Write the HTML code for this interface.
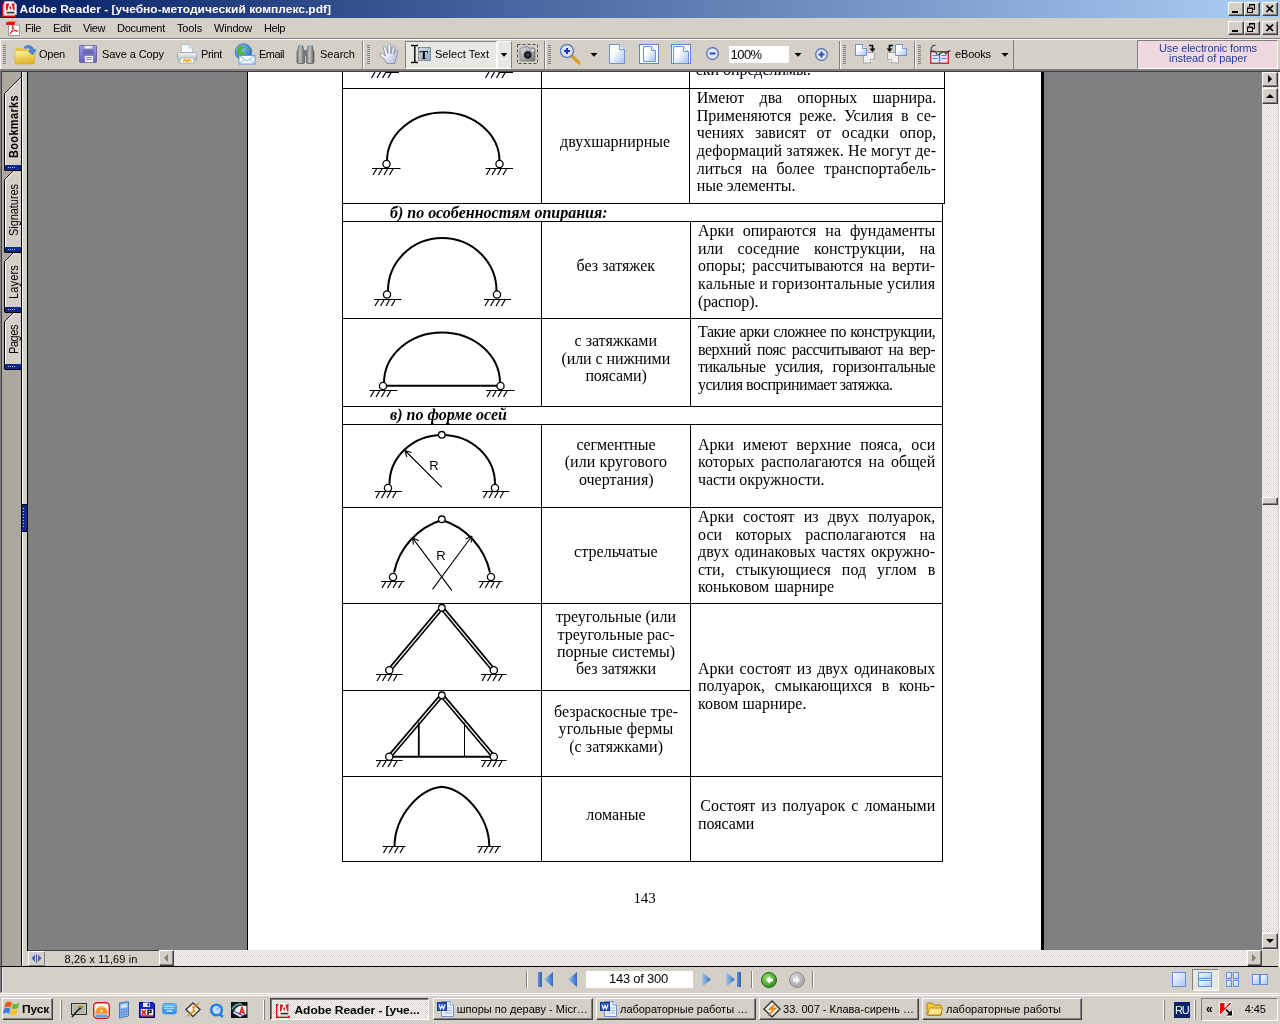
<!DOCTYPE html>
<html lang="ru"><head><meta charset="utf-8"><title>Adobe Reader - [учебно-методический комплекс.pdf]</title>
<style>
html,body{margin:0;padding:0}
body{width:1280px;height:1024px;position:relative;overflow:hidden;background:#d4d0c8;font-family:"Liberation Sans",sans-serif;font-size:11px;color:#000}
.btn{position:absolute;background:#d4d0c8;box-sizing:border-box;border:1px solid;border-color:#fff #404040 #404040 #fff;box-shadow:inset -1px -1px 0 #808080}
.chk{background-image:conic-gradient(#fff 25%,#d4d0c8 0 50%,#fff 0 75%,#d4d0c8 0);background-size:2px 2px}
.grip{position:absolute;width:3px;background:repeating-linear-gradient(to bottom,#808080 0,#808080 1px,transparent 1px,transparent 2px)}
</style></head><body><div id="root" style="position:absolute;left:0;top:0;width:1280px;height:1024px;will-change:transform">
<div style="position:absolute;left:0px;top:0px;width:1280px;height:18px;background:linear-gradient(to right,#0a246a 0%,#0a246a 3%,#a6caf0 97%,#a6caf0 100%)"></div>
<svg style="position:absolute;left:2px;top:1px;" width="16" height="16" viewBox="0 0 16 16"><rect x="0.700" y="2.700" width="12.600" height="12.600" fill="#e8e8e8" stroke="#d01010" stroke-width="1.400"/><path d="M2.500 0.500 H11.500 L14.500 3.500 V13.500 H2.500 Z" fill="#fafafa" stroke="#c8c8c8" stroke-width=".600"/><path d="M11.500 0.500 V3.500 H14.500 Z" fill="#d0d0d0"/><path d="M4 9.500 V2.500 H7.200 L5.300 9.500 Z M12.500 9.500 V2.500 H9.400 L11.300 9.500 Z M8.300 4.800 L9.800 8.400 H8.400 L7.900 7.200 H6.800 Z" fill="#e01818"/><rect x="4.500" y="10.800" width="8" height="1.600" fill="#303030"/></svg>
<div style="position:absolute;left:19.50px;top:0.84px;line-height:16px;white-space:pre;font-family:'Liberation Sans',sans-serif;font-size:12px;font-weight:bold;font-style:normal;letter-spacing:0.000px;color:#fff;transform:scaleY(0.93);transform-origin:0 12.16px;">Adobe Reader - [учебно-методический комплекс.pdf]</div>
<div class="btn" style="left:1228px;top:2px;width:16px;height:14px"><svg width="14" height="12" viewBox="0 0 14 12" style="position:absolute;left:0;top:0" ><rect x="3" y="8" width="6" height="2" fill="#000"/></svg></div>
<div class="btn" style="left:1244px;top:2px;width:16px;height:14px"><svg width="14" height="12" viewBox="0 0 14 12" style="position:absolute;left:0;top:0" ><path d="M4.500 4 V2 H9.500 V6.500 H8" stroke="#000" fill="none"/><path d="M4 1.500 H10" stroke="#000"/><rect x="2.500" y="5.500" width="5" height="4" fill="none" stroke="#000"/><path d="M2 5 H8" stroke="#000"/></svg></div>
<div class="btn" style="left:1262px;top:2px;width:16px;height:14px"><svg width="14" height="12" viewBox="0 0 14 12" style="position:absolute;left:0;top:0" ><path d="M3.500 2.500 L10 9 M10 2.500 L3.500 9" stroke="#000" stroke-width="1.700"/></svg></div>
<div class="btn" style="left:1228px;top:21px;width:16px;height:14px"><svg width="14" height="12" viewBox="0 0 14 12" style="position:absolute;left:0;top:0" ><rect x="3" y="8" width="6" height="2" fill="#000"/></svg></div>
<div class="btn" style="left:1244px;top:21px;width:16px;height:14px"><svg width="14" height="12" viewBox="0 0 14 12" style="position:absolute;left:0;top:0" ><path d="M4.500 4 V2 H9.500 V6.500 H8" stroke="#000" fill="none"/><path d="M4 1.500 H10" stroke="#000"/><rect x="2.500" y="5.500" width="5" height="4" fill="none" stroke="#000"/><path d="M2 5 H8" stroke="#000"/></svg></div>
<div class="btn" style="left:1262px;top:21px;width:16px;height:14px"><svg width="14" height="12" viewBox="0 0 14 12" style="position:absolute;left:0;top:0" ><path d="M3.500 2.500 L10 9 M10 2.500 L3.500 9" stroke="#000" stroke-width="1.700"/></svg></div>
<svg style="position:absolute;left:5px;top:20px;" width="16" height="17" viewBox="0 0 16 17"><path d="M3.5 1.5 H11 L14.5 5 V15.5 H3.5 Z" fill="#fff" stroke="#9a9a9a"/><path d="M11 1.5 V5 H14.5" fill="#e8e8e8" stroke="#9a9a9a"/><rect x="1" y="2" width="9" height="3" fill="#e01818"/><path d="M5 14 C7 11 8.5 8 8 5.5 C7.5 4.5 7 6 8 8 C9 10 11 11.5 12.5 11.5 C13.5 11 12 10.3 10 10.6 C8 11 6 12 4.5 13.5" stroke="#e02020" fill="none" stroke-width="1"/></svg>
<div style="position:absolute;left:25.00px;top:21.19px;line-height:14px;white-space:pre;font-family:'Liberation Sans',sans-serif;font-size:11px;font-weight:normal;font-style:normal;letter-spacing:-0.434px;">File</div>
<div style="position:absolute;left:53.00px;top:21.19px;line-height:14px;white-space:pre;font-family:'Liberation Sans',sans-serif;font-size:11px;font-weight:normal;font-style:normal;letter-spacing:-0.242px;">Edit</div>
<div style="position:absolute;left:83.00px;top:21.19px;line-height:14px;white-space:pre;font-family:'Liberation Sans',sans-serif;font-size:11px;font-weight:normal;font-style:normal;letter-spacing:-0.414px;">View</div>
<div style="position:absolute;left:117.00px;top:21.19px;line-height:14px;white-space:pre;font-family:'Liberation Sans',sans-serif;font-size:11px;font-weight:normal;font-style:normal;letter-spacing:-0.268px;">Document</div>
<div style="position:absolute;left:177.00px;top:21.19px;line-height:14px;white-space:pre;font-family:'Liberation Sans',sans-serif;font-size:11px;font-weight:normal;font-style:normal;letter-spacing:-0.138px;">Tools</div>
<div style="position:absolute;left:214.00px;top:21.19px;line-height:14px;white-space:pre;font-family:'Liberation Sans',sans-serif;font-size:11px;font-weight:normal;font-style:normal;letter-spacing:-0.188px;">Window</div>
<div style="position:absolute;left:264.00px;top:21.19px;line-height:14px;white-space:pre;font-family:'Liberation Sans',sans-serif;font-size:11px;font-weight:normal;font-style:normal;letter-spacing:-0.406px;">Help</div>
<div style="position:absolute;left:0px;top:38px;width:1280px;height:1px;background:#808080"></div>
<div style="position:absolute;left:0px;top:39px;width:1280px;height:1px;background:#fff"></div>
<div class="grip" style="left:3px;top:45px;height:19px"></div>
<div style="position:absolute;left:0px;top:40px;width:1px;height:29px;background:#fff"></div>
<svg style="position:absolute;left:13px;top:42px;" width="24" height="24" viewBox="0 0 24 24"><defs><linearGradient id="fo" x1="0" y1="0" x2="0.300" y2="1"><stop offset="0" stop-color="#fff6a8"/><stop offset="1" stop-color="#e4b428"/></linearGradient></defs><path d="M2.500 7 C2.500 6.300 3 6 3.500 6 H9.500 L11 7.500 H14 V10 H2.500 Z" fill="#e8c040"/><path d="M1.500 9.500 L3 8.500 H21.500 L22.500 9.500 L21 22 H2.500 Z" fill="url(#fo)" stroke="#d4a420" stroke-width=".600"/><path d="M11 5.500 C13 2.500 19.500 2.500 20.500 8 L22.800 7.600 L19.500 13 L15.500 9 L17.800 8.600 C17.300 5.600 14 5.300 12.500 6.500 Z" fill="#4c8cdc" stroke="#2c64b4" stroke-width=".700"/></svg>
<div style="position:absolute;left:39.00px;top:47.19px;line-height:14px;white-space:pre;font-family:'Liberation Sans',sans-serif;font-size:11px;font-weight:normal;font-style:normal;letter-spacing:-0.230px;">Open</div>
<svg style="position:absolute;left:78px;top:42px;" width="22" height="24" viewBox="0 0 22 24"><defs><linearGradient id="fs" x1="0" y1="0" x2="0" y2="1"><stop offset="0" stop-color="#9c9ce8"/><stop offset="1" stop-color="#6464b8"/></linearGradient></defs><path d="M1.500 4.500 C1.500 3.800 2 3.500 2.500 3.500 H17.500 C18.200 3.500 18.500 4 18.500 4.500 V19.500 C18.500 20.200 18 20.500 17.500 20.500 H2.500 C1.800 20.500 1.500 20 1.500 19.500 Z" fill="url(#fs)" stroke="#5858a8" stroke-width=".800"/><rect x="6" y="3.500" width="9" height="3.500" fill="#d8d8e0" stroke="#7070a0" stroke-width=".500"/><rect x="8" y="4.200" width="4" height="1.800" fill="#f8f8f8"/><rect x="4.500" y="7.500" width="11" height="5" fill="#5050a0" opacity=".550"/><rect x="6.500" y="13.500" width="9" height="7" fill="#f8f8fc" stroke="#5050a0" stroke-width=".500"/><path d="M8 15.500 H14 M8 17.500 H14" stroke="#8888a8" stroke-width="1"/></svg>
<div style="position:absolute;left:102.00px;top:47.19px;line-height:14px;white-space:pre;font-family:'Liberation Sans',sans-serif;font-size:11px;font-weight:normal;font-style:normal;letter-spacing:-0.089px;">Save a Copy</div>
<svg style="position:absolute;left:176px;top:42px;" width="24" height="24" viewBox="0 0 24 24"><defs><linearGradient id="pr" x1="0" y1="0" x2="0" y2="1"><stop offset="0" stop-color="#f4f6f8"/><stop offset="1" stop-color="#b4bcc8"/></linearGradient></defs><path d="M5.500 2.500 H13 L16.500 6 V11 H5.500 Z" fill="#f8fbff" stroke="#a8b8d0" stroke-width=".800"/><path d="M13 2.500 V6 H16.500" fill="#dce8f8" stroke="#a8b8d0" stroke-width=".600"/><path d="M3 10.500 H19 C20 10.500 20.500 11 20.500 12 V17 C20.500 18 20 18.500 19 18.500 H3 C2 18.500 1.500 18 1.500 17 V12 C1.500 11 2 10.500 3 10.500 Z" fill="url(#pr)" stroke="#98a0b0" stroke-width=".800"/><path d="M4.500 16 H17.500 L18.500 21 H3.500 Z" fill="#f4f4f0" stroke="#a0a8b4" stroke-width=".700"/><path d="M7 19 L9 17.500 L11 19.500 L13 17.500 L15 19.500" stroke="#f0b000" fill="none" stroke-width="1.600"/></svg>
<div style="position:absolute;left:201.00px;top:47.19px;line-height:14px;white-space:pre;font-family:'Liberation Sans',sans-serif;font-size:11px;font-weight:normal;font-style:normal;letter-spacing:-0.325px;">Print</div>
<svg style="position:absolute;left:233px;top:42px;" width="24" height="24" viewBox="0 0 24 24"><defs><radialGradient id="gl" cx=".350" cy=".300" r=".800"><stop offset="0" stop-color="#8cc8ff"/><stop offset="1" stop-color="#1c64c0"/></radialGradient></defs><circle cx="10.500" cy="10" r="8.300" fill="url(#gl)" stroke="#2464b0" stroke-width=".600"/><path d="M6 4.500 C8 3 11 3.500 12 5 C11 7 8.500 7 8 9 C9.500 10.500 12 10 13 12 C12 14.500 9.500 15.500 8.500 17.500 C6 15 5 12 4 10 C3.500 8 4.500 6 6 4.500 Z" fill="#58b048"/><path d="M14.500 4.500 C16.500 6 17 8 16 9.500 C15 8 14 6.500 14.500 4.500 Z" fill="#58b048"/><rect x="6" y="13.500" width="16" height="8.500" fill="#fbfdff" stroke="#5c94e0" stroke-width=".900"/><path d="M6 13.500 L14 19 L22 13.500 M6 22 L11.500 17.500 M22 22 L16.500 17.500" fill="none" stroke="#78a8e8" stroke-width=".900"/></svg>
<div style="position:absolute;left:259.00px;top:47.19px;line-height:14px;white-space:pre;font-family:'Liberation Sans',sans-serif;font-size:11px;font-weight:normal;font-style:normal;letter-spacing:-0.503px;">Email</div>
<svg style="position:absolute;left:295px;top:42px;" width="24" height="24" viewBox="0 0 24 24"><defs><linearGradient id="bn" x1="0" y1="0" x2="1" y2="0"><stop offset="0" stop-color="#707070"/><stop offset=".400" stop-color="#c4c4c4"/><stop offset="1" stop-color="#606060"/></linearGradient></defs><path d="M2 10 L3.500 6 V4 H8 V6 L9.500 10 V20 C9.500 21 9 21.500 8 21.500 H3.500 C2.500 21.500 2 21 2 20 Z" fill="url(#bn)" stroke="#585858" stroke-width=".700"/><path d="M11.500 10 L13 6 V4 H17.500 V6 L19 10 V20 C19 21 18.500 21.500 17.500 21.500 H13 C12 21.500 11.500 21 11.500 20 Z" fill="url(#bn)" stroke="#585858" stroke-width=".700"/><rect x="9" y="8" width="3" height="6" fill="#787878"/><rect x="4" y="3.300" width="3.500" height="1.400" fill="#90b8e0"/><rect x="13.500" y="3.300" width="3.500" height="1.400" fill="#90b8e0"/></svg>
<div style="position:absolute;left:320.00px;top:47.19px;line-height:14px;white-space:pre;font-family:'Liberation Sans',sans-serif;font-size:11px;font-weight:normal;font-style:normal;letter-spacing:0.023px;">Search</div>
<div style="position:absolute;left:362px;top:41px;width:1px;height:28px;background:#808080"></div>
<div style="position:absolute;left:363px;top:41px;width:1px;height:28px;background:#fff"></div>
<div class="grip" style="left:367px;top:45px;height:19px"></div>
<svg style="position:absolute;left:376px;top:42px;" width="24" height="24" viewBox="0 0 24 24"><defs><linearGradient id="hg" x1="0" y1="0" x2="1" y2="1"><stop offset="0.3" stop-color="#fff"/><stop offset="1" stop-color="#a8b4d4"/></linearGradient></defs><path d="M11 21.500 C9 18 7 15.500 4.500 13.500 C3.500 12 4.500 10.500 6.500 11.500 L9.500 14 L7.500 6.500 C7.200 4.500 9.500 4 10.200 6 L12 11.500 L11.800 4 C11.800 1.800 14.600 1.800 14.800 4 L15 11.500 L16.300 5 C16.800 3 19.200 3.500 18.900 5.500 L17.800 12.500 L19.800 9 C20.800 7.200 22.600 8.200 21.800 10 C20.500 14 20 18 18.800 21.500 Z" fill="url(#hg)" stroke="#8890a8" stroke-width="1" stroke-linejoin="round"/></svg>
<div style="position:absolute;left:405px;top:41px;width:92px;height:28px;box-sizing:border-box;background:#eae8e3;border:1px solid;border-color:#808080 #fff #fff #808080"></div>
<div style="position:absolute;left:497px;top:41px;width:15px;height:28px;box-sizing:border-box;background:#eae8e3;border:1px solid;border-color:#fff #808080 #fff #fff"></div>
<svg style="position:absolute;left:408px;top:43px;" width="26" height="22" viewBox="0 0 26 22"><defs><linearGradient id="tg" x1="0" y1="0" x2="1" y2="1"><stop offset="0" stop-color="#d0dae4"/><stop offset="1" stop-color="#94aac4"/></linearGradient></defs><rect x="10.500" y="4.500" width="12" height="13" fill="url(#tg)" stroke="#606870" stroke-dasharray="2 1"/><path d="M3 2.500 H6 M10 2.500 H7.500 M6.800 2 V20 M3 19.500 H6 M10 19.500 H7.500" stroke="#101010" stroke-width="1.500" fill="none"/></svg>
<div style="position:absolute;left:419.50px;top:46.11px;line-height:17px;white-space:pre;font-family:'Liberation Serif',serif;font-size:13px;font-weight:bold;font-style:normal;letter-spacing:-0.172px;">T</div>
<div style="position:absolute;left:435.00px;top:47.19px;line-height:14px;white-space:pre;font-family:'Liberation Sans',sans-serif;font-size:11px;font-weight:normal;font-style:normal;letter-spacing:0.036px;">Select Text</div>
<svg style="position:absolute;left:500px;top:53px;" width="8" height="5" viewBox="0 0 8 5"><path d="M0.500 0 H7.500 L4 3.800 Z" fill="#000"/></svg>
<svg style="position:absolute;left:516px;top:43px;" width="24" height="22" viewBox="0 0 24 22"><defs><linearGradient id="cm" x1="0" y1="0" x2="1" y2="1"><stop offset="0" stop-color="#e4e4e8"/><stop offset="1" stop-color="#707078"/></linearGradient></defs><rect x="1.500" y="1.500" width="20" height="19" fill="none" stroke="#505050" stroke-dasharray="3 2"/><path d="M4 6.500 C4 5.500 4.500 5 5.500 5 H7 L8 3.800 H12 L13 5 H17.500 C18.500 5 19 5.500 19 6.500 V16.500 C19 17.500 18.500 18 17.500 18 H5.500 C4.500 18 4 17.500 4 16.500 Z" fill="url(#cm)" stroke="#686870" stroke-width=".700"/><circle cx="11.800" cy="12" r="4.300" fill="#181820" stroke="#a8a8b0" stroke-width="1"/><circle cx="11.800" cy="12" r="1.600" fill="#404860"/><rect x="15.500" y="6.500" width="2.500" height="1.500" fill="#f4f4f4"/></svg>
<div style="position:absolute;left:544px;top:41px;width:1px;height:28px;background:#808080"></div>
<div style="position:absolute;left:545px;top:41px;width:1px;height:28px;background:#fff"></div>
<div class="grip" style="left:548px;top:45px;height:19px"></div>
<svg style="position:absolute;left:558px;top:42px;" width="24" height="24" viewBox="0 0 24 24"><path d="M12 12 L21 21" stroke="#d8a020" stroke-width="3.2" stroke-linecap="round"/><circle cx="9" cy="9" r="6.500" fill="#d8e4ff" stroke="#7080a8" stroke-width="1.500"/><path d="M6 9 H12 M9 6 V12" stroke="#2030c0" stroke-width="2"/></svg>
<svg style="position:absolute;left:590px;top:53px;" width="8" height="5" viewBox="0 0 8 5"><path d="M0.500 0 H7.500 L4 3.800 Z" fill="#000"/></svg>
<svg width="0" height="0" style="position:absolute"><defs><linearGradient id="pgg" x1="0" y1="0" x2="1" y2="1"><stop offset="0.35" stop-color="#fff"/><stop offset="1" stop-color="#a4c0f0"/></linearGradient></defs></svg>
<svg style="position:absolute;left:608px;top:43px;" width="20" height="22" viewBox="0 0 20 22"><path d="M1.5 1.5 H11.5 L16.5 6.5 V20.5 H1.5 Z" fill="url(#pgg)" stroke="#6c94d4"/><path d="M11.5 1.5 V6.5 H16.5" fill="#f4f8ff" stroke="#6c94d4"/></svg>
<svg style="position:absolute;left:638px;top:43px;" width="22" height="22" viewBox="0 0 22 22"><rect x="1.500" y="1.500" width="19" height="19" fill="#fff" stroke="#5888cc" stroke-width="1"/><path d="M5.5 3.5 H13.5 L17.5 7.5 V18.5 H5.5 Z" fill="url(#pgg)" stroke="#6c94d4"/><path d="M13.5 3.5 V7.5 H17.5" fill="#f4f8ff" stroke="#6c94d4"/></svg>
<svg style="position:absolute;left:670px;top:43px;" width="22" height="22" viewBox="0 0 22 22"><rect x="1.500" y="1.500" width="19" height="19" fill="#fff" stroke="#5888cc" stroke-width="1"/><path d="M3.5 3.5 H13.5 L18.5 8.5 V20.5 H3.5 Z" fill="url(#pgg)" stroke="#6c94d4"/><path d="M13.5 3.5 V8.5 H18.5" fill="#f4f8ff" stroke="#6c94d4"/></svg>
<svg style="position:absolute;left:706px;top:47px;" width="13" height="13" viewBox="0 0 13 13"><circle cx="6.500" cy="6.500" r="5.800" fill="#e0e8ff" stroke="#5068b0" stroke-width="1.200"/><path d="M3.500 6.500 H9.500" stroke="#3050b0" stroke-width="2"/></svg>
<div style="position:absolute;left:729px;top:46px;width:60px;height:17px;background:#fff"></div>
<div style="position:absolute;left:730.60px;top:45.60px;line-height:17px;white-space:pre;font-family:'Liberation Sans',sans-serif;font-size:13px;font-weight:normal;font-style:normal;letter-spacing:-0.562px;">100%</div>
<svg style="position:absolute;left:794px;top:53px;" width="8" height="5" viewBox="0 0 8 5"><path d="M0.500 0 H7.500 L4 3.800 Z" fill="#000"/></svg>
<svg style="position:absolute;left:815px;top:47.5px;" width="13" height="13" viewBox="0 0 13 13"><circle cx="6.500" cy="6.500" r="5.800" fill="#e0e8ff" stroke="#5068b0" stroke-width="1.200"/><path d="M3.500 6.500 H9.500 M6.500 3.500 V9.500" stroke="#3050b0" stroke-width="2"/></svg>
<div style="position:absolute;left:839px;top:41px;width:1px;height:28px;background:#808080"></div>
<div style="position:absolute;left:840px;top:41px;width:1px;height:28px;background:#fff"></div>
<div class="grip" style="left:843px;top:45px;height:19px"></div>
<svg style="position:absolute;left:853px;top:43px;" width="24" height="22" viewBox="0 0 24 22"><path d="M10.500 9.500 H21.500 V16.500 L17.500 20 H10.500 Z" fill="#f0f0f0" stroke="#a8a8a8"/><path d="M17.500 20 V16.500 H21.500" fill="#fff" stroke="#a8a8a8"/><path d="M2.5 1.5 H9.5 L13.5 5.5 V12.5 H2.5 Z" fill="url(#pgg)" stroke="#6c94d4"/><path d="M9.5 1.5 V5.5 H13.5" fill="#f4f8ff" stroke="#6c94d4"/><path d="M16 2.500 H19.500 V6" fill="none" stroke="#000" stroke-width="1.600"/><path d="M16.500 5.500 H22.500 L19.500 9 Z" fill="#000"/></svg>
<svg style="position:absolute;left:885px;top:43px;" width="24" height="22" viewBox="0 0 24 22"><path d="M2.500 9.500 H13.500 V20 H6.500 L2.500 16.500 Z" fill="#f0f0f0" stroke="#a8a8a8"/><path d="M6.500 20 V16.500 H2.500" fill="#fff" stroke="#a8a8a8"/><path d="M10.5 1.5 H17.5 L21.5 5.5 V12.5 H10.5 Z" fill="url(#pgg)" stroke="#6c94d4"/><path d="M17.5 1.5 V5.5 H21.5" fill="#f4f8ff" stroke="#6c94d4"/><path d="M8 2.500 H4.500 V6" fill="none" stroke="#000" stroke-width="1.600"/><path d="M1.500 5.500 H7.500 L4.500 9 Z" fill="#000"/></svg>
<div style="position:absolute;left:914px;top:41px;width:1px;height:28px;background:#808080"></div>
<div style="position:absolute;left:915px;top:41px;width:1px;height:28px;background:#fff"></div>
<div class="grip" style="left:918px;top:45px;height:19px"></div>
<svg style="position:absolute;left:928px;top:42px;" width="24" height="24" viewBox="0 0 24 24"><rect x="2.700" y="9.700" width="17.600" height="11.600" fill="#e4e4fc" stroke="#c83030" stroke-width="1.400"/><path d="M11.500 10 V21" stroke="#5078d0" stroke-width="1.200"/><path d="M4.500 13.500 H9.500 M4.500 16.500 H9.500 M13.500 13.500 H18.500 M13.500 16.500 H18.500" stroke="#6878d0" stroke-width="1.200"/><path d="M3 10 C2.500 5 5 2.500 7.500 3.500 M3.500 9.500 C5 8 7.500 9 8.500 11.500 C9.500 13.500 11.500 13.500 12.500 11.500 C14 9 17 9.500 18 12 C19 10 21 8.500 22.500 9" fill="none" stroke="#383838" stroke-width="1.100"/></svg>
<div style="position:absolute;left:955.00px;top:47.19px;line-height:14px;white-space:pre;font-family:'Liberation Sans',sans-serif;font-size:11px;font-weight:normal;font-style:normal;letter-spacing:-0.117px;">eBooks</div>
<svg style="position:absolute;left:1001px;top:53px;" width="8" height="5" viewBox="0 0 8 5"><path d="M0.500 0 H7.500 L4 3.800 Z" fill="#000"/></svg>
<div style="position:absolute;left:1013px;top:40px;width:1px;height:29px;background:#808080"></div>
<div style="position:absolute;left:1137px;top:40px;width:141px;height:29px;box-sizing:border-box;background:#f0d8e0;border:1px solid;border-color:#808080 #fff #fff #808080"></div>
<div style="position:absolute;left:1159.00px;top:41.19px;line-height:14px;white-space:pre;font-family:'Liberation Sans',sans-serif;font-size:11px;font-weight:normal;font-style:normal;letter-spacing:-0.113px;color:#2040a0;">Use electronic forms</div>
<div style="position:absolute;left:1169.00px;top:51.19px;line-height:14px;white-space:pre;font-family:'Liberation Sans',sans-serif;font-size:11px;font-weight:normal;font-style:normal;letter-spacing:-0.056px;color:#2040a0;">instead of paper</div>
<div style="position:absolute;left:0px;top:69px;width:1280px;height:2px;background:#808080"></div>
<div style="position:absolute;left:1px;top:71px;width:1279px;height:1px;background:#404040"></div>
<div style="position:absolute;left:0px;top:72px;width:1280px;height:878px;background:#808080"></div>
<div style="position:absolute;left:0px;top:71px;width:1px;height:896px;background:#808080"></div>
<div style="position:absolute;left:1px;top:71px;width:1px;height:896px;background:#404040"></div>
<div style="position:absolute;left:2px;top:72px;width:19px;height:895px;background:#aca8a0"></div>
<div style="position:absolute;left:21px;top:72px;width:1px;height:895px;background:#000"></div>
<div style="position:absolute;left:22px;top:72px;width:1px;height:895px;background:#fff"></div>
<div style="position:absolute;left:23px;top:72px;width:4px;height:895px;background:#d4d0c8"></div>
<div style="position:absolute;left:27px;top:72px;width:1px;height:879px;background:#000"></div>
<div style="position:absolute;left:21px;top:504px;width:7px;height:28px;background:#000"></div>
<div style="position:absolute;left:22px;top:505px;width:5px;height:26px;background:#10288c"></div>
<div style="position:absolute;left:23px;top:508px;width:1px;height:19px;background:repeating-linear-gradient(to bottom,#d0d8f0 0,#d0d8f0 1px,transparent 1px,transparent 3px)"></div>
<svg style="position:absolute;left:3px;top:304px;" width="19" height="66" viewBox="0 0 19 66"><path d="M18 0 L1 17 V66 H18 Z" fill="#d4d0c8"/><path d="M18 2.5 L2.5 18 V60" fill="none" stroke="#fff"/><path d="M18 1 L1.5 17.5 V65" fill="none" stroke="#000"/><rect x="2" y="60" width="16" height="5" fill="#10288c"/><path d="M1.5 65.5 H18" stroke="#000"/><path d="M5 62.5 H13" stroke="#b0c0f0" stroke-dasharray="1 1"/></svg>
<svg style="position:absolute;left:3px;top:244px;" width="19" height="69" viewBox="0 0 19 69"><path d="M18 0 L1 17 V69 H18 Z" fill="#d4d0c8"/><path d="M18 2.5 L2.5 18 V63" fill="none" stroke="#fff"/><path d="M18 1 L1.5 17.5 V68" fill="none" stroke="#000"/><rect x="2" y="63" width="16" height="5" fill="#10288c"/><path d="M1.5 68.5 H18" stroke="#000"/><path d="M5 65.5 H13" stroke="#b0c0f0" stroke-dasharray="1 1"/></svg>
<svg style="position:absolute;left:3px;top:162px;" width="19" height="91" viewBox="0 0 19 91"><path d="M18 0 L1 17 V91 H18 Z" fill="#d4d0c8"/><path d="M18 2.5 L2.5 18 V85" fill="none" stroke="#fff"/><path d="M18 1 L1.5 17.5 V90" fill="none" stroke="#000"/><rect x="2" y="85" width="16" height="5" fill="#10288c"/><path d="M1.5 90.5 H18" stroke="#000"/><path d="M5 87.5 H13" stroke="#b0c0f0" stroke-dasharray="1 1"/></svg>
<svg style="position:absolute;left:3px;top:76px;" width="19" height="95" viewBox="0 0 19 95"><path d="M18 0 L1 17 V95 H18 Z" fill="#d4d0c8"/><path d="M18 2.5 L2.5 18 V89" fill="none" stroke="#fff"/><path d="M18 1 L1.5 17.5 V94" fill="none" stroke="#000"/><rect x="2" y="89" width="16" height="5" fill="#10288c"/><path d="M1.5 94.5 H18" stroke="#000"/><path d="M5 91.5 H13" stroke="#b0c0f0" stroke-dasharray="1 1"/></svg>
<div style="position:absolute;left:17.5px;top:158px;width:0;height:0"><div style="position:absolute;left:0;top:-12px;line-height:16px;white-space:pre;transform-origin:0 12px;transform:rotate(-90deg) scaleY(1.1);font-family:'Liberation Sans',sans-serif;font-size:11px;font-weight:bold;font-style:normal;letter-spacing:0.342px">Bookmarks</div></div>
<div style="position:absolute;left:17.5px;top:236px;width:0;height:0"><div style="position:absolute;left:0;top:-12px;line-height:16px;white-space:pre;transform-origin:0 12px;transform:rotate(-90deg) scaleY(1.1);font-family:'Liberation Sans',sans-serif;font-size:11px;font-weight:normal;font-style:normal;letter-spacing:-0.059px">Signatures</div></div>
<div style="position:absolute;left:17.5px;top:298.5px;width:0;height:0"><div style="position:absolute;left:0;top:-12px;line-height:16px;white-space:pre;transform-origin:0 12px;transform:rotate(-90deg) scaleY(1.1);font-family:'Liberation Sans',sans-serif;font-size:11px;font-weight:normal;font-style:normal;letter-spacing:0.161px">Layers</div></div>
<div style="position:absolute;left:17.5px;top:354px;width:0;height:0"><div style="position:absolute;left:0;top:-12px;line-height:16px;white-space:pre;transform-origin:0 12px;transform:rotate(-90deg) scaleY(1.1);font-family:'Liberation Sans',sans-serif;font-size:11px;font-weight:normal;font-style:normal;letter-spacing:-0.441px">Pages</div></div>
<div style="position:absolute;left:247px;top:72px;width:1px;height:878px;background:#000"></div>
<div style="position:absolute;left:248px;top:72px;width:793px;height:878px;background:#fff"></div>
<div style="position:absolute;left:1041px;top:72px;width:3px;height:878px;background:#000"></div>
<div class="chk" style="position:absolute;left:1262px;top:72px;width:16px;height:878px"></div>
<div style="position:absolute;left:1278px;top:72px;width:1px;height:895px;background:#d4d0c8"></div>
<div style="position:absolute;left:1279px;top:72px;width:1px;height:895px;background:#fff"></div>
<div class="btn" style="left:1262px;top:72px;width:16px;height:15px"><svg width="4" height="8" style="position:absolute;left:5px;top:2px" fill="#000"><path d="M0 0 L4 4 L0 8 Z"/></svg></div>
<div class="btn" style="left:1262px;top:88px;width:16px;height:16px"><svg width="8" height="4" style="position:absolute;left:3px;top:5px" fill="#000"><path d="M0 4 L4 0 L8 4 Z"/></svg></div>
<div class="btn" style="left:1262px;top:933px;width:16px;height:16px"><svg width="8" height="4" style="position:absolute;left:3px;top:5px" fill="#000"><path d="M0 0 L4 4 L8 0 Z"/></svg></div>
<div class="btn" style="left:1262px;top:497px;width:16px;height:8px"></div>
<div style="position:absolute;left:0;top:72px;width:1262px;height:878px;overflow:hidden"><div style="position:absolute;left:0;top:-72px;width:1262px;height:1024px">
<svg style="position:absolute;left:0px;top:0px;" width="1262" height="1024" viewBox="0 0 1262 1024"><g fill="#000"><rect x="342" y="60" width="1" height="802"/><rect x="541" y="60" width="1" height="143"/><rect x="689" y="60" width="1" height="143"/><rect x="944" y="60" width="1" height="144"/><rect x="342" y="88" width="603" height="1"/><rect x="342" y="203" width="603" height="1"/><rect x="342" y="221" width="601" height="1"/><rect x="942" y="204" width="1" height="658"/><rect x="541" y="221" width="1" height="185"/><rect x="690" y="221" width="1" height="185"/><rect x="342" y="318" width="601" height="1"/><rect x="342" y="406" width="601" height="1"/><rect x="342" y="424" width="601" height="1"/><rect x="541" y="424" width="1" height="438"/><rect x="690" y="424" width="1" height="438"/><rect x="342" y="507" width="601" height="1"/><rect x="342" y="603" width="601" height="1"/><rect x="342" y="690" width="349" height="1"/><rect x="342" y="776" width="601" height="1"/><rect x="342" y="861" width="601" height="1"/></g></svg>
<svg style="position:absolute;left:0px;top:0px;" width="1262" height="1024" viewBox="0 0 1262 1024"><path d="M371 71.5 H399.5" stroke="#000" stroke-width="1" fill="none"/><path d="M375.0 72 L371.5 78" stroke="#000" stroke-width="1.2" fill="none"/><path d="M380.5 72 L377.0 78" stroke="#000" stroke-width="1.2" fill="none"/><path d="M386.0 72 L382.5 78" stroke="#000" stroke-width="1.2" fill="none"/><path d="M391.5 72 L388.0 78" stroke="#000" stroke-width="1.2" fill="none"/><path d="M485 71.5 H513" stroke="#000" stroke-width="1" fill="none"/><path d="M489.0 72 L485.5 78" stroke="#000" stroke-width="1.2" fill="none"/><path d="M494.5 72 L491.0 78" stroke="#000" stroke-width="1.2" fill="none"/><path d="M500.0 72 L496.5 78" stroke="#000" stroke-width="1.2" fill="none"/><path d="M505.5 72 L502.0 78" stroke="#000" stroke-width="1.2" fill="none"/><path d="M386 72.500 H399 M498.500 72.500 H513" stroke="#000" stroke-width="1"/><path d="M387 161 A56.25 48.5 0 0 1 499.5 161" fill="none" stroke="#000" stroke-width="2"/><path d="M372 168.5 H400.5" stroke="#000" stroke-width="1" fill="none"/><path d="M376.5 169 L373.0 175" stroke="#000" stroke-width="1.2" fill="none"/><path d="M382.0 169 L378.5 175" stroke="#000" stroke-width="1.2" fill="none"/><path d="M387.5 169 L384.0 175" stroke="#000" stroke-width="1.2" fill="none"/><path d="M393.0 169 L389.5 175" stroke="#000" stroke-width="1.2" fill="none"/><path d="M485.5 168.5 H513" stroke="#000" stroke-width="1" fill="none"/><path d="M490.0 169 L486.5 175" stroke="#000" stroke-width="1.2" fill="none"/><path d="M495.5 169 L492.0 175" stroke="#000" stroke-width="1.2" fill="none"/><path d="M501.0 169 L497.5 175" stroke="#000" stroke-width="1.2" fill="none"/><path d="M506.5 169 L503.0 175" stroke="#000" stroke-width="1.2" fill="none"/><circle cx="386.5" cy="164" r="3.6" fill="#fff" stroke="#000" stroke-width="1.3"/><circle cx="499.5" cy="164" r="3.6" fill="#fff" stroke="#000" stroke-width="1.3"/><path d="M388 291 A54.25 53 0 0 1 496.5 291" fill="none" stroke="#000" stroke-width="2"/><path d="M374 299.5 H401.5" stroke="#000" stroke-width="1" fill="none"/><path d="M378.5 300 L375.0 306" stroke="#000" stroke-width="1.2" fill="none"/><path d="M384.0 300 L380.5 306" stroke="#000" stroke-width="1.2" fill="none"/><path d="M389.5 300 L386.0 306" stroke="#000" stroke-width="1.2" fill="none"/><path d="M395.0 300 L391.5 306" stroke="#000" stroke-width="1.2" fill="none"/><path d="M484 299.5 H511" stroke="#000" stroke-width="1" fill="none"/><path d="M488.5 300 L485.0 306" stroke="#000" stroke-width="1.2" fill="none"/><path d="M494.0 300 L490.5 306" stroke="#000" stroke-width="1.2" fill="none"/><path d="M499.5 300 L496.0 306" stroke="#000" stroke-width="1.2" fill="none"/><path d="M505.0 300 L501.5 306" stroke="#000" stroke-width="1.2" fill="none"/><circle cx="387" cy="294.5" r="3.6" fill="#fff" stroke="#000" stroke-width="1.3"/><circle cx="497" cy="294.5" r="3.6" fill="#fff" stroke="#000" stroke-width="1.3"/><path d="M384 383 A58.0 50.5 0 0 1 500 383" fill="none" stroke="#000" stroke-width="2"/><path d="M386 385.800 H498" stroke="#000" stroke-width="2"/><path d="M369.5 390.5 H397.5" stroke="#000" stroke-width="1" fill="none"/><path d="M374.0 391 L370.5 397" stroke="#000" stroke-width="1.2" fill="none"/><path d="M379.5 391 L376.0 397" stroke="#000" stroke-width="1.2" fill="none"/><path d="M385.0 391 L381.5 397" stroke="#000" stroke-width="1.2" fill="none"/><path d="M390.5 391 L387.0 397" stroke="#000" stroke-width="1.2" fill="none"/><path d="M486 390.5 H514.5" stroke="#000" stroke-width="1" fill="none"/><path d="M490.5 391 L487.0 397" stroke="#000" stroke-width="1.2" fill="none"/><path d="M496.0 391 L492.5 397" stroke="#000" stroke-width="1.2" fill="none"/><path d="M501.5 391 L498.0 397" stroke="#000" stroke-width="1.2" fill="none"/><path d="M507.0 391 L503.5 397" stroke="#000" stroke-width="1.2" fill="none"/><circle cx="383" cy="386" r="3.6" fill="#fff" stroke="#000" stroke-width="1.3"/><circle cx="500.5" cy="386" r="3.6" fill="#fff" stroke="#000" stroke-width="1.3"/><path d="M389.5 484 A52.75 49 0 0 1 495 484" fill="none" stroke="#000" stroke-width="2"/><path d="M375 491.5 H402" stroke="#000" stroke-width="1" fill="none"/><path d="M379.5 492 L376.0 498" stroke="#000" stroke-width="1.2" fill="none"/><path d="M385.0 492 L381.5 498" stroke="#000" stroke-width="1.2" fill="none"/><path d="M390.5 492 L387.0 498" stroke="#000" stroke-width="1.2" fill="none"/><path d="M396.0 492 L392.5 498" stroke="#000" stroke-width="1.2" fill="none"/><path d="M482.5 491.5 H509" stroke="#000" stroke-width="1" fill="none"/><path d="M487.0 492 L483.5 498" stroke="#000" stroke-width="1.2" fill="none"/><path d="M492.5 492 L489.0 498" stroke="#000" stroke-width="1.2" fill="none"/><path d="M498.0 492 L494.5 498" stroke="#000" stroke-width="1.2" fill="none"/><path d="M503.5 492 L500.0 498" stroke="#000" stroke-width="1.2" fill="none"/><circle cx="388" cy="488" r="3.6" fill="#fff" stroke="#000" stroke-width="1.3"/><circle cx="495" cy="488" r="3.6" fill="#fff" stroke="#000" stroke-width="1.3"/><circle cx="441.8" cy="434.8" r="3.3" fill="#fff" stroke="#000" stroke-width="1.3"/><path d="M441.800 487.300 L405 450.500 M405 450.500 L411.500 452.500 M405 450.500 L406.800 457" stroke="#000" stroke-width="1.100" fill="none"/><path d="M394 572.500 A70.5 70.5 0 0 1 441.800 520 A70.5 70.5 0 0 1 490 572.500" fill="none" stroke="#000" stroke-width="2"/><path d="M381 581.5 H404.5" stroke="#000" stroke-width="1" fill="none"/><path d="M385.5 582 L382.0 588" stroke="#000" stroke-width="1.2" fill="none"/><path d="M391.0 582 L387.5 588" stroke="#000" stroke-width="1.2" fill="none"/><path d="M396.5 582 L393.0 588" stroke="#000" stroke-width="1.2" fill="none"/><path d="M402.0 582 L398.5 588" stroke="#000" stroke-width="1.2" fill="none"/><path d="M478.7 581.5 H502.5" stroke="#000" stroke-width="1" fill="none"/><path d="M483.2 582 L479.7 588" stroke="#000" stroke-width="1.2" fill="none"/><path d="M488.7 582 L485.2 588" stroke="#000" stroke-width="1.2" fill="none"/><path d="M494.2 582 L490.7 588" stroke="#000" stroke-width="1.2" fill="none"/><path d="M499.7 582 L496.2 588" stroke="#000" stroke-width="1.2" fill="none"/><circle cx="393" cy="577" r="3.6" fill="#fff" stroke="#000" stroke-width="1.3"/><circle cx="491" cy="577" r="3.6" fill="#fff" stroke="#000" stroke-width="1.3"/><circle cx="441.8" cy="519.3" r="3.3" fill="#fff" stroke="#000" stroke-width="1.3"/><path d="M451.800 590.300 L412.500 537.800 M412.500 537.800 L418.800 540.800 M412.500 537.800 L413.500 544.500" stroke="#000" stroke-width="1.100" fill="none"/><path d="M432.500 589.300 L472 536 M472 536 L465.700 539 M472 536 L471 542.700" stroke="#000" stroke-width="1.100" fill="none"/><path d="M389.3 670.3 L441.8 607.8" stroke="#000" stroke-width="4.600"/><path d="M389.3 670.3 L441.8 607.8" stroke="#fff" stroke-width="1.300"/><path d="M441.8 607.8 L493.8 670.3" stroke="#000" stroke-width="4.600"/><path d="M441.8 607.8 L493.8 670.3" stroke="#fff" stroke-width="1.300"/><path d="M376 674.5 H402.5" stroke="#000" stroke-width="1" fill="none"/><path d="M380.5 675 L377.0 681" stroke="#000" stroke-width="1.2" fill="none"/><path d="M386.0 675 L382.5 681" stroke="#000" stroke-width="1.2" fill="none"/><path d="M391.5 675 L388.0 681" stroke="#000" stroke-width="1.2" fill="none"/><path d="M397.0 675 L393.5 681" stroke="#000" stroke-width="1.2" fill="none"/><path d="M481 674.5 H506.5" stroke="#000" stroke-width="1" fill="none"/><path d="M485.5 675 L482.0 681" stroke="#000" stroke-width="1.2" fill="none"/><path d="M491.0 675 L487.5 681" stroke="#000" stroke-width="1.2" fill="none"/><path d="M496.5 675 L493.0 681" stroke="#000" stroke-width="1.2" fill="none"/><path d="M502.0 675 L498.5 681" stroke="#000" stroke-width="1.2" fill="none"/><circle cx="389.3" cy="670.3" r="3.6" fill="#fff" stroke="#000" stroke-width="1.3"/><circle cx="493.8" cy="670.3" r="3.6" fill="#fff" stroke="#000" stroke-width="1.3"/><circle cx="441.8" cy="607.8" r="3.3" fill="#fff" stroke="#000" stroke-width="1.3"/><path d="M389.3 756.8 L441.8 695.3" stroke="#000" stroke-width="4.600"/><path d="M389.3 756.8 L441.8 695.3" stroke="#fff" stroke-width="1.300"/><path d="M441.8 695.3 L493.8 756.8" stroke="#000" stroke-width="4.600"/><path d="M441.8 695.3 L493.8 756.8" stroke="#fff" stroke-width="1.300"/><path d="M392 756.800 H491" stroke="#000" stroke-width="2"/><path d="M418.800 722.500 V757" stroke="#000" stroke-width="1.800"/><path d="M464.500 722.500 V757" stroke="#000" stroke-width="1"/><path d="M376 760.5 H402.5" stroke="#000" stroke-width="1" fill="none"/><path d="M380.5 761 L377.0 767" stroke="#000" stroke-width="1.2" fill="none"/><path d="M386.0 761 L382.5 767" stroke="#000" stroke-width="1.2" fill="none"/><path d="M391.5 761 L388.0 767" stroke="#000" stroke-width="1.2" fill="none"/><path d="M397.0 761 L393.5 767" stroke="#000" stroke-width="1.2" fill="none"/><path d="M481 760.5 H506.5" stroke="#000" stroke-width="1" fill="none"/><path d="M485.5 761 L482.0 767" stroke="#000" stroke-width="1.2" fill="none"/><path d="M491.0 761 L487.5 767" stroke="#000" stroke-width="1.2" fill="none"/><path d="M496.5 761 L493.0 767" stroke="#000" stroke-width="1.2" fill="none"/><path d="M502.0 761 L498.5 767" stroke="#000" stroke-width="1.2" fill="none"/><circle cx="389.3" cy="756.8" r="3.6" fill="#fff" stroke="#000" stroke-width="1.3"/><circle cx="493.8" cy="756.8" r="3.6" fill="#fff" stroke="#000" stroke-width="1.3"/><circle cx="441.8" cy="695.3" r="3.3" fill="#fff" stroke="#000" stroke-width="1.3"/><path d="M394.500 846 C395 815 420 789 441.800 786.800 C463.500 789 488.800 815 489.300 846" fill="none" stroke="#000" stroke-width="2"/><path d="M382.5 846.5 H405.5" stroke="#000" stroke-width="1" fill="none"/><path d="M387.0 847 L383.5 853" stroke="#000" stroke-width="1.2" fill="none"/><path d="M392.5 847 L389.0 853" stroke="#000" stroke-width="1.2" fill="none"/><path d="M398.0 847 L394.5 853" stroke="#000" stroke-width="1.2" fill="none"/><path d="M403.5 847 L400.0 853" stroke="#000" stroke-width="1.2" fill="none"/><path d="M477.5 846.5 H501" stroke="#000" stroke-width="1" fill="none"/><path d="M482.0 847 L478.5 853" stroke="#000" stroke-width="1.2" fill="none"/><path d="M487.5 847 L484.0 853" stroke="#000" stroke-width="1.2" fill="none"/><path d="M493.0 847 L489.5 853" stroke="#000" stroke-width="1.2" fill="none"/><path d="M498.5 847 L495.0 853" stroke="#000" stroke-width="1.2" fill="none"/></svg>
<div style="position:absolute;left:429.30px;top:456.80px;line-height:17px;white-space:pre;font-family:'Liberation Sans',sans-serif;font-size:13px;font-weight:normal;font-style:normal;letter-spacing:0.109px;">R</div>
<div style="position:absolute;left:436.30px;top:546.80px;line-height:17px;white-space:pre;font-family:'Liberation Sans',sans-serif;font-size:13px;font-weight:normal;font-style:normal;letter-spacing:-0.391px;">R</div>
<div style="position:absolute;left:390.00px;top:202.10px;line-height:21px;white-space:pre;font-family:'Liberation Serif',serif;font-size:16px;font-weight:bold;font-style:italic;letter-spacing:-0.013px;">б) по особенностям опирания:</div>
<div style="position:absolute;left:390.00px;top:404.10px;line-height:21px;white-space:pre;font-family:'Liberation Serif',serif;font-size:16px;font-weight:bold;font-style:italic;letter-spacing:0.001px;">в) по форме осей</div>
<div style="position:absolute;left:560.00px;top:131.00px;line-height:21px;white-space:pre;font-family:'Liberation Serif',serif;font-size:16px;font-weight:normal;font-style:normal;letter-spacing:0.007px;">двухшарнирные</div>
<div style="position:absolute;left:576.60px;top:255.00px;line-height:21px;white-space:pre;font-family:'Liberation Serif',serif;font-size:16px;font-weight:normal;font-style:normal;letter-spacing:0.007px;">без затяжек</div>
<div style="position:absolute;left:574.60px;top:329.90px;line-height:21px;white-space:pre;font-family:'Liberation Serif',serif;font-size:16px;font-weight:normal;font-style:normal;letter-spacing:-0.020px;">с затяжками</div>
<div style="position:absolute;left:561.40px;top:347.50px;line-height:21px;white-space:pre;font-family:'Liberation Serif',serif;font-size:16px;font-weight:normal;font-style:normal;letter-spacing:-0.052px;">(или с нижними</div>
<div style="position:absolute;left:585.40px;top:364.60px;line-height:21px;white-space:pre;font-family:'Liberation Serif',serif;font-size:16px;font-weight:normal;font-style:normal;letter-spacing:-0.091px;">поясами)</div>
<div style="position:absolute;left:576.40px;top:434.00px;line-height:21px;white-space:pre;font-family:'Liberation Serif',serif;font-size:16px;font-weight:normal;font-style:normal;letter-spacing:-0.085px;">сегментные</div>
<div style="position:absolute;left:564.70px;top:451.00px;line-height:21px;white-space:pre;font-family:'Liberation Serif',serif;font-size:16px;font-weight:normal;font-style:normal;letter-spacing:0.051px;">(или кругового</div>
<div style="position:absolute;left:578.90px;top:468.60px;line-height:21px;white-space:pre;font-family:'Liberation Serif',serif;font-size:16px;font-weight:normal;font-style:normal;letter-spacing:0.008px;">очертания)</div>
<div style="position:absolute;left:574.00px;top:540.80px;line-height:21px;white-space:pre;font-family:'Liberation Serif',serif;font-size:16px;font-weight:normal;font-style:normal;letter-spacing:0.061px;">стрельчатые</div>
<div style="position:absolute;left:555.90px;top:605.70px;line-height:21px;white-space:pre;font-family:'Liberation Serif',serif;font-size:16px;font-weight:normal;font-style:normal;letter-spacing:0.007px;">треугольные (или</div>
<div style="position:absolute;left:557.50px;top:623.60px;line-height:21px;white-space:pre;font-family:'Liberation Serif',serif;font-size:16px;font-weight:normal;font-style:normal;letter-spacing:0.001px;">треугольные рас-</div>
<div style="position:absolute;left:556.90px;top:640.80px;line-height:21px;white-space:pre;font-family:'Liberation Serif',serif;font-size:16px;font-weight:normal;font-style:normal;letter-spacing:0.004px;">порные системы)</div>
<div style="position:absolute;left:576.00px;top:658.40px;line-height:21px;white-space:pre;font-family:'Liberation Serif',serif;font-size:16px;font-weight:normal;font-style:normal;letter-spacing:0.001px;">без затяжки</div>
<div style="position:absolute;left:554.10px;top:700.60px;line-height:21px;white-space:pre;font-family:'Liberation Serif',serif;font-size:16px;font-weight:normal;font-style:normal;letter-spacing:-0.015px;">безраскосные тре-</div>
<div style="position:absolute;left:558.60px;top:718.40px;line-height:21px;white-space:pre;font-family:'Liberation Serif',serif;font-size:16px;font-weight:normal;font-style:normal;letter-spacing:0.061px;">угольные фермы</div>
<div style="position:absolute;left:569.20px;top:735.90px;line-height:21px;white-space:pre;font-family:'Liberation Serif',serif;font-size:16px;font-weight:normal;font-style:normal;letter-spacing:0.048px;">(с затяжками)</div>
<div style="position:absolute;left:586.20px;top:804.00px;line-height:21px;white-space:pre;font-family:'Liberation Serif',serif;font-size:16px;font-weight:normal;font-style:normal;letter-spacing:0.054px;">ломаные</div>
<div style="position:absolute;left:633.40px;top:888.44px;line-height:20px;white-space:pre;font-family:'Liberation Serif',serif;font-size:15px;font-weight:normal;font-style:normal;letter-spacing:-0.033px;">143</div>
<div style="position:absolute;left:695.70px;top:58.70px;line-height:21px;white-space:pre;font-family:'Liberation Serif',serif;font-size:16px;font-weight:normal;font-style:normal;letter-spacing:-0.037px;">ски определимы.</div>
<div style="position:absolute;left:696.70px;top:86.60px;line-height:21px;white-space:pre;font-family:'Liberation Serif',serif;font-size:16px;font-weight:normal;font-style:normal;word-spacing:11.292px;">Имеют два опорных шарнира.</div>
<div style="position:absolute;left:696.70px;top:104.60px;line-height:21px;white-space:pre;font-family:'Liberation Serif',serif;font-size:16px;font-weight:normal;font-style:normal;word-spacing:3.883px;">Применяются реже. Усилия в се-</div>
<div style="position:absolute;left:696.70px;top:122.40px;line-height:21px;white-space:pre;font-family:'Liberation Serif',serif;font-size:16px;font-weight:normal;font-style:normal;word-spacing:6.562px;">чениях зависят от осадки опор,</div>
<div style="position:absolute;left:696.70px;top:140.10px;line-height:21px;white-space:pre;font-family:'Liberation Serif',serif;font-size:16px;font-weight:normal;font-style:normal;letter-spacing:0.105px;">деформаций затяжек. Не могут де-</div>
<div style="position:absolute;left:696.70px;top:157.70px;line-height:21px;white-space:pre;font-family:'Liberation Serif',serif;font-size:16px;font-weight:normal;font-style:normal;word-spacing:5.396px;">литься на более транспортабель-</div>
<div style="position:absolute;left:696.70px;top:175.10px;line-height:21px;white-space:pre;font-family:'Liberation Serif',serif;font-size:16px;font-weight:normal;font-style:normal;letter-spacing:-0.062px;">ные элементы.</div>
<div style="position:absolute;left:698.00px;top:219.80px;line-height:21px;white-space:pre;font-family:'Liberation Serif',serif;font-size:16px;font-weight:normal;font-style:normal;word-spacing:4.905px;">Арки опираются на фундаменты</div>
<div style="position:absolute;left:698.00px;top:237.70px;line-height:21px;white-space:pre;font-family:'Liberation Serif',serif;font-size:16px;font-weight:normal;font-style:normal;word-spacing:10.436px;">или соседние конструкции, на</div>
<div style="position:absolute;left:698.00px;top:255.20px;line-height:21px;white-space:pre;font-family:'Liberation Serif',serif;font-size:16px;font-weight:normal;font-style:normal;word-spacing:2.457px;">опоры; рассчитываются на верти-</div>
<div style="position:absolute;left:698.00px;top:272.80px;line-height:21px;white-space:pre;font-family:'Liberation Serif',serif;font-size:16px;font-weight:normal;font-style:normal;letter-spacing:0.095px;">кальные и горизонтальные усилия</div>
<div style="position:absolute;left:698.00px;top:290.60px;line-height:21px;white-space:pre;font-family:'Liberation Serif',serif;font-size:16px;font-weight:normal;font-style:normal;letter-spacing:-0.125px;">(распор).</div>
<div style="position:absolute;left:698.00px;top:320.80px;line-height:21px;white-space:pre;font-family:'Liberation Serif',serif;font-size:16px;font-weight:normal;font-style:normal;letter-spacing:-0.5px;word-spacing:0.679px;">Такие арки сложнее по конструкции,</div>
<div style="position:absolute;left:698.00px;top:338.70px;line-height:21px;white-space:pre;font-family:'Liberation Serif',serif;font-size:16px;font-weight:normal;font-style:normal;letter-spacing:-0.5px;word-spacing:2.663px;">верхний пояс рассчитывают на вер-</div>
<div style="position:absolute;left:698.00px;top:356.30px;line-height:21px;white-space:pre;font-family:'Liberation Serif',serif;font-size:16px;font-weight:normal;font-style:normal;letter-spacing:-0.5px;word-spacing:5.983px;">тикальные усилия, горизонтальные</div>
<div style="position:absolute;left:698.00px;top:374.00px;line-height:21px;white-space:pre;font-family:'Liberation Serif',serif;font-size:16px;font-weight:normal;font-style:normal;letter-spacing:-0.5px;word-spacing:-0.106px;">усилия воспринимает затяжка.</div>
<div style="position:absolute;left:698.00px;top:433.80px;line-height:21px;white-space:pre;font-family:'Liberation Serif',serif;font-size:16px;font-weight:normal;font-style:normal;word-spacing:4.980px;">Арки имеют верхние пояса, оси</div>
<div style="position:absolute;left:698.00px;top:451.10px;line-height:21px;white-space:pre;font-family:'Liberation Serif',serif;font-size:16px;font-weight:normal;font-style:normal;word-spacing:2.811px;">которых располагаются на общей</div>
<div style="position:absolute;left:698.00px;top:468.80px;line-height:21px;white-space:pre;font-family:'Liberation Serif',serif;font-size:16px;font-weight:normal;font-style:normal;letter-spacing:-0.084px;">части окружности.</div>
<div style="position:absolute;left:698.00px;top:506.00px;line-height:21px;white-space:pre;font-family:'Liberation Serif',serif;font-size:16px;font-weight:normal;font-style:normal;word-spacing:5.210px;">Арки состоят из двух полуарок,</div>
<div style="position:absolute;left:698.00px;top:523.60px;line-height:21px;white-space:pre;font-family:'Liberation Serif',serif;font-size:16px;font-weight:normal;font-style:normal;word-spacing:9.499px;">оси которых располагаются на</div>
<div style="position:absolute;left:698.00px;top:541.20px;line-height:21px;white-space:pre;font-family:'Liberation Serif',serif;font-size:16px;font-weight:normal;font-style:normal;word-spacing:1.395px;">двух одинаковых частях окружно-</div>
<div style="position:absolute;left:698.00px;top:558.90px;line-height:21px;white-space:pre;font-family:'Liberation Serif',serif;font-size:16px;font-weight:normal;font-style:normal;word-spacing:6.999px;">сти, стыкующиеся под углом в</div>
<div style="position:absolute;left:698.00px;top:576.40px;line-height:21px;white-space:pre;font-family:'Liberation Serif',serif;font-size:16px;font-weight:normal;font-style:normal;word-spacing:1.497px;">коньковом шарнире</div>
<div style="position:absolute;left:698.00px;top:657.90px;line-height:21px;white-space:pre;font-family:'Liberation Serif',serif;font-size:16px;font-weight:normal;font-style:normal;word-spacing:1.667px;">Арки состоят из двух одинаковых</div>
<div style="position:absolute;left:698.00px;top:675.30px;line-height:21px;white-space:pre;font-family:'Liberation Serif',serif;font-size:16px;font-weight:normal;font-style:normal;word-spacing:5.681px;">полуарок, смыкающихся в конь-</div>
<div style="position:absolute;left:698.00px;top:692.70px;line-height:21px;white-space:pre;font-family:'Liberation Serif',serif;font-size:16px;font-weight:normal;font-style:normal;letter-spacing:0.045px;">ковом шарнире.</div>
<div style="position:absolute;left:700.30px;top:795.00px;line-height:21px;white-space:pre;font-family:'Liberation Serif',serif;font-size:16px;font-weight:normal;font-style:normal;word-spacing:2.030px;">Состоят из полуарок с ломаными</div>
<div style="position:absolute;left:698.00px;top:812.70px;line-height:21px;white-space:pre;font-family:'Liberation Serif',serif;font-size:16px;font-weight:normal;font-style:normal;letter-spacing:-0.058px;">поясами</div>
</div></div>
<div style="position:absolute;left:28px;top:950px;width:1234px;height:16px;background:#d4d0c8"></div>
<div class="chk" style="position:absolute;left:174px;top:950px;width:1073px;height:16px"></div>
<div style="position:absolute;left:28px;top:950px;width:131px;height:1px;background:#404040"></div>
<div style="position:absolute;left:28px;top:951px;width:17px;height:15px;box-sizing:border-box;background:#d4d0c8;border:1px solid;border-color:#fff #808080 #808080 #fff"></div>
<svg style="position:absolute;left:31px;top:954px;" width="11" height="9" viewBox="0 0 11 9"><path d="M4 0.500 V8 L0.500 4.250 Z M7 0.500 V8 L10.500 4.250 Z" fill="#4868a8"/><path d="M5.500 0 V9" stroke="#4868a8"/></svg>
<div style="position:absolute;left:64.50px;top:951.59px;line-height:14px;white-space:pre;font-family:'Liberation Sans',sans-serif;font-size:11px;font-weight:normal;font-style:normal;letter-spacing:0.109px;">8,26 x 11,69 in</div>
<div class="btn" style="left:159px;top:950px;width:15px;height:16px"><svg width="4" height="8" style="position:absolute;left:4px;top:3px" fill="#808080"><path d="M4 0 L0 4 L4 8 Z"/></svg></div>
<div class="btn" style="left:1247px;top:950px;width:15px;height:16px"><svg width="4" height="8" style="position:absolute;left:4px;top:3px" fill="#808080"><path d="M0 0 L4 4 L0 8 Z"/></svg></div>
<div style="position:absolute;left:1262px;top:950px;width:16px;height:16px;background:#d4d0c8"></div>
<div style="position:absolute;left:0px;top:966px;width:1278px;height:1px;background:#000"></div>
<div style="position:absolute;left:0px;top:967px;width:1280px;height:27px;background:#d4d0c8"></div>
<div style="position:absolute;left:0px;top:967px;width:1px;height:26px;background:#808080"></div>
<div style="position:absolute;left:1px;top:967px;width:1px;height:25px;background:#404040"></div>
<div style="position:absolute;left:2px;top:967px;width:1px;height:26px;background:#eceae4"></div>
<div style="position:absolute;left:526px;top:971px;width:1px;height:17px;background:#808080"></div>
<div style="position:absolute;left:527px;top:971px;width:1px;height:17px;background:#fff"></div>
<div style="position:absolute;left:538px;top:972px;width:4px;height:15px;background:linear-gradient(to right,#6090d8,#3060b0)"></div>
<svg style="position:absolute;left:544px;top:972px;" width="9" height="15" viewBox="0 0 9 15"><defs><linearGradient id="t544" x1="0" y1="0" x2="1" y2="0"><stop offset="0" stop-color="#a8c8f0"/><stop offset="1" stop-color="#3068c0"/></linearGradient></defs><path d="M9 0 L0 7.5 L9 15 Z" fill="url(#t544)"/></svg>
<svg style="position:absolute;left:568px;top:972px;" width="9" height="15" viewBox="0 0 9 15"><defs><linearGradient id="t568" x1="0" y1="0" x2="1" y2="0"><stop offset="0" stop-color="#a8c8f0"/><stop offset="1" stop-color="#3068c0"/></linearGradient></defs><path d="M9 0 L0 7.5 L9 15 Z" fill="url(#t568)"/></svg>
<div style="position:absolute;left:586px;top:971px;width:107px;height:17px;background:#fff"></div>
<div style="position:absolute;left:609.00px;top:970.40px;line-height:17px;white-space:pre;font-family:'Liberation Sans',sans-serif;font-size:13px;font-weight:normal;font-style:normal;letter-spacing:-0.245px;">143 of 300</div>
<svg style="position:absolute;left:702px;top:972px;" width="9" height="15" viewBox="0 0 9 15"><defs><linearGradient id="t702" x1="0" y1="0" x2="1" y2="0"><stop offset="0" stop-color="#a8c8f0"/><stop offset="1" stop-color="#3068c0"/></linearGradient></defs><path d="M0 0 L9 7.5 L0 15 Z" fill="url(#t702)"/></svg>
<svg style="position:absolute;left:726px;top:972px;" width="9" height="15" viewBox="0 0 9 15"><defs><linearGradient id="t726" x1="0" y1="0" x2="1" y2="0"><stop offset="0" stop-color="#a8c8f0"/><stop offset="1" stop-color="#3068c0"/></linearGradient></defs><path d="M0 0 L9 7.5 L0 15 Z" fill="url(#t726)"/></svg>
<div style="position:absolute;left:737px;top:972px;width:4px;height:15px;background:linear-gradient(to right,#6090d8,#3060b0)"></div>
<div style="position:absolute;left:751px;top:971px;width:1px;height:17px;background:#808080"></div>
<div style="position:absolute;left:752px;top:971px;width:1px;height:17px;background:#fff"></div>
<svg style="position:absolute;left:761px;top:972px;" width="16" height="16" viewBox="0 0 16 16"><defs><radialGradient id="gg" cx=".4" cy=".35" r=".7"><stop offset="0" stop-color="#a0e070"/><stop offset="1" stop-color="#2a8a18"/></radialGradient></defs><circle cx="8" cy="8" r="7.500" fill="url(#gg)" stroke="#1c6c10"/><path d="M9 4 L5 8 L9 12 V9.500 H12 V6.500 H9 Z" fill="#fff"/></svg>
<svg style="position:absolute;left:789px;top:972px;" width="16" height="16" viewBox="0 0 16 16"><defs><radialGradient id="gr" cx=".4" cy=".35" r=".7"><stop offset="0" stop-color="#e0e0e0"/><stop offset="1" stop-color="#9a9a9a"/></radialGradient></defs><circle cx="8" cy="8" r="7.500" fill="url(#gr)" stroke="#909090"/><path d="M7 4 L11 8 L7 12 V9.500 H4 V6.500 H7 Z" fill="#f4f4f4"/></svg>
<div style="position:absolute;left:812px;top:971px;width:1px;height:17px;background:#808080"></div>
<div style="position:absolute;left:813px;top:971px;width:1px;height:17px;background:#fff"></div>
<svg width="0" height="0" style="position:absolute"><defs><linearGradient id="vg" x1="0" y1="0" x2="1" y2="1"><stop offset="0" stop-color="#fff"/><stop offset="1" stop-color="#a8c4f0"/></linearGradient></defs></svg>
<svg style="position:absolute;left:1172px;top:972px;" width="14" height="15" viewBox="0 0 14 15"><rect x="0.500" y="0.500" width="13" height="14" fill="url(#vg)" stroke="#6090d8"/></svg>
<div style="position:absolute;left:1192px;top:969px;width:27px;height:22px;box-sizing:border-box;background:#e8e6e0;border:1px solid;border-color:#808080 #fff #fff #808080"></div>
<svg style="position:absolute;left:1198px;top:972px;" width="15" height="16" viewBox="0 0 15 16"><rect x="0.500" y="0.500" width="13" height="6" fill="url(#vg)" stroke="#6090d8"/><rect x="0.500" y="8.500" width="13" height="6" fill="url(#vg)" stroke="#6090d8"/><path d="M0.500 0 V15 M13.500 0 V15" stroke="#6090d8"/></svg>
<svg style="position:absolute;left:1226px;top:972px;" width="14" height="16" viewBox="0 0 14 16"><rect x="0.500" y="0.500" width="5" height="6" fill="url(#vg)" stroke="#6090d8"/><rect x="7.500" y="0.500" width="5" height="6" fill="url(#vg)" stroke="#6090d8"/><rect x="0.500" y="8.500" width="5" height="6" fill="url(#vg)" stroke="#6090d8"/><rect x="7.500" y="8.500" width="5" height="6" fill="url(#vg)" stroke="#6090d8"/></svg>
<svg style="position:absolute;left:1252px;top:974px;" width="17" height="11" viewBox="0 0 17 11"><rect x="0.500" y="0.500" width="7" height="10" fill="url(#vg)" stroke="#6090d8"/><rect x="8.500" y="0.500" width="7" height="10" fill="url(#vg)" stroke="#6090d8"/></svg>
<div style="position:absolute;left:0px;top:993px;width:1280px;height:31px;background:#d4d0c8"></div>
<div style="position:absolute;left:0px;top:993px;width:1280px;height:1px;background:#fff"></div>
<div style="position:absolute;left:0px;top:995px;width:1280px;height:1px;background:#fff"></div>
<div class="btn" style="left:2px;top:998px;width:51px;height:22px"></div>
<svg style="position:absolute;left:3px;top:1000px;" width="18" height="17" viewBox="0 0 18 17"><path d="M2.500 3 C4.500 1.200 6.800 1.200 8.800 2.800 L7.600 7.800 C5.600 6.400 3.400 6.400 1.300 8 Z" fill="#f05818"/><path d="M9.800 3.300 C11.800 4.600 14 4.400 16.200 2.800 L15 7.800 C12.800 9.400 10.600 9.400 8.600 8.200 Z" fill="#68bc30"/><path d="M1 9 C3.100 7.400 5.300 7.400 7.400 8.800 L6.200 13.800 C4.100 12.400 1.900 12.400 -0.200 14 Z" fill="#3878e0"/><path d="M8.400 9.200 C10.400 10.400 12.600 10.400 14.800 8.800 L13.600 13.800 C11.400 15.400 9.200 15.400 7.200 14.200 Z" fill="#f8c020"/></svg>
<div style="position:absolute;left:22.00px;top:1000.59px;line-height:16px;white-space:pre;font-family:'Liberation Sans',sans-serif;font-size:12px;font-weight:bold;font-style:normal;letter-spacing:-0.172px;transform:scaleY(0.93);transform-origin:0 12.16px;">Пуск</div>
<div style="position:absolute;left:60px;top:1000px;width:1px;height:20px;background:#fff"></div>
<div style="position:absolute;left:61px;top:1000px;width:1px;height:20px;background:#808080"></div>
<svg style="position:absolute;left:70px;top:1001px;" width="18" height="18" viewBox="0 0 18 18"><rect x="1.500" y="2.500" width="15" height="11" fill="#c8c8c0" stroke="#303030"/><rect x="3" y="4" width="12" height="8" fill="#b0b8a8"/><path d="M2 16 L8 9 L12 6" stroke="#202020" stroke-width="1.600" fill="none"/><path d="M8 6 H13" stroke="#a09020" stroke-width="2"/></svg>
<svg style="position:absolute;left:93px;top:1002px;" width="17" height="17" viewBox="0 0 17 17"><rect x="0.700" y="0.700" width="15.600" height="15.600" rx="3.500" fill="#fff" stroke="#d81818" stroke-width="1.400"/><path d="M2.200 11.500 A6.300 7.500 0 0 1 14.800 11.500 Z" fill="#f89428"/><path d="M4 6 A6 7 0 0 1 13 6 Z" fill="#fcc070"/><rect x="2.500" y="12.500" width="12" height="2.500" fill="#58a8e8"/><circle cx="8.500" cy="9" r="1.100" fill="#fff"/><path d="M2.500 11.800 H14.500" stroke="#c04000" stroke-width=".800" stroke-dasharray="1 1"/></svg>
<svg style="position:absolute;left:116px;top:1001px;" width="16" height="18" viewBox="0 0 16 18"><path d="M3.500 2 L12.500 0.500 V15 L3.500 17 Z" fill="#88b4ec" stroke="#4878c0"/><path d="M5 4 L11 3 V6 L5 7 Z" fill="#d8e8fc"/><path d="M5 9 L11 8 M5 11.500 L11 10.500 M5 14 L11 13" stroke="#3868b8" stroke-dasharray="1.500 1"/></svg>
<svg style="position:absolute;left:139px;top:1002px;" width="16" height="16" viewBox="0 0 16 16"><path d="M0.500 0.500 H14 L15.500 2 V15.500 H0.500 Z" fill="#1828d0" stroke="#000068"/><rect x="4" y="0.500" width="7" height="4.500" fill="#e8e8f0"/><rect x="8.500" y="1.300" width="1.800" height="2.800" fill="#1828d0"/><rect x="1.800" y="7" width="12.400" height="6.500" fill="#f8f8f8"/><path d="M2.800 8 L6.800 12.800 M6.800 8 L2.800 12.800" stroke="#e01010" stroke-width="1.600"/><path d="M9 13 V8.200 H12 V10.600 H9" stroke="#101010" stroke-width="1.400" fill="none"/><rect x="1.800" y="13.500" width="12.400" height="1" fill="#e02020"/></svg>
<svg style="position:absolute;left:162px;top:1003px;" width="15" height="12" viewBox="0 0 15 12"><defs><linearGradient id="kb" x1="0" y1="0" x2="0" y2="1"><stop offset="0" stop-color="#68c0ff"/><stop offset="1" stop-color="#2c8ce0"/></linearGradient></defs><rect x="0.500" y="0.500" width="14" height="10.500" rx="2.500" fill="url(#kb)" stroke="#3c98e8" stroke-width=".800"/><path d="M2.500 3.500 H12.500 M2.500 5.500 H12.500" stroke="#f0f8ff" stroke-dasharray="1.200 .800"/><path d="M4.500 8 H10.500" stroke="#f0f8ff" stroke-width="1.300"/></svg>
<svg style="position:absolute;left:184px;top:1001px;" width="18" height="18" viewBox="0 0 18 18"><path d="M9 2 L16 8.500 L9 15.500 L2 8.500 Z" fill="#f4f4ec" stroke="#404040" stroke-width="1.500"/><path d="M15.500 1.500 L8 6.500 L10.500 8 L3 15.500 L11.500 10 L9 8.500 Z" fill="#f8a020" stroke="#d07000" stroke-width=".500"/></svg>
<svg style="position:absolute;left:209px;top:1002px;" width="16" height="17" viewBox="0 0 16 17"><circle cx="7.500" cy="8" r="5.300" fill="#c8dcf4" stroke="#2880e0" stroke-width="2.600"/><path d="M10.500 11.500 L13.800 15" stroke="#2880e0" stroke-width="2.600"/><path d="M7.500 8 L9.800 5.200" stroke="#5090d8" stroke-width="1"/></svg>
<svg style="position:absolute;left:231px;top:1002px;" width="17" height="16" viewBox="0 0 17 16"><rect x="0" y="0" width="16.500" height="16" fill="#101418"/><path d="M0.500 7 C2 2 7 0.500 11 1.500 L11 3 C7 2.500 3.500 4 2 8 Z" fill="#4c9c98"/><path d="M5 6 C8 3 12 3 15.500 4 V12 L9 15 L2 11 Z" fill="#f0f0f4"/><path d="M8.500 12.500 L11 5.500 L13.500 12.500 M9.500 10.300 H12.500" stroke="#e02020" stroke-width="1.500" fill="none"/><path d="M3.500 9.500 L13 14" stroke="#2030b0" stroke-width="1"/></svg>
<div style="position:absolute;left:263px;top:1000px;width:1px;height:20px;background:#fff"></div>
<div style="position:absolute;left:264px;top:1000px;width:1px;height:20px;background:#808080"></div>
<div class="chk" style="position:absolute;left:270px;top:998px;width:159px;height:22px;box-sizing:border-box;border:1px solid;border-color:#404040 #fff #fff #404040;box-shadow:inset 1px 1px 0 #808080"></div>
<svg style="position:absolute;left:276px;top:1002px;" width="16" height="16" viewBox="0 0 16 16"><rect x="0.700" y="2.700" width="12.600" height="12.600" fill="#e8e8e8" stroke="#d01010" stroke-width="1.400"/><path d="M2.500 0.500 H11.500 L14.500 3.500 V13.500 H2.500 Z" fill="#fafafa" stroke="#c8c8c8" stroke-width=".600"/><path d="M11.500 0.500 V3.500 H14.500 Z" fill="#d0d0d0"/><path d="M4 9.500 V2.500 H7.200 L5.300 9.500 Z M12.500 9.500 V2.500 H9.400 L11.300 9.500 Z M8.300 4.800 L9.800 8.400 H8.400 L7.900 7.200 H6.800 Z" fill="#e01818"/><rect x="4.500" y="10.800" width="8" height="1.600" fill="#303030"/></svg>
<div style="position:absolute;left:294.50px;top:1001.59px;line-height:16px;white-space:pre;font-family:'Liberation Sans',sans-serif;font-size:12px;font-weight:bold;font-style:normal;letter-spacing:-0.060px;transform:scaleY(0.93);transform-origin:0 12.16px;">Adobe Reader - [уче...</div>
<div class="btn" style="left:433px;top:998px;width:160px;height:22px"></div>
<svg style="position:absolute;left:437px;top:1000px;" width="17" height="18" viewBox="0 0 17 18"><path d="M4.500 1.500 H13 L16.500 5 V16.500 H4.500 Z" fill="#f0f4ff" stroke="#7090d0"/><path d="M13 1.500 V5 H16.500" fill="#fff" stroke="#7090d0"/><path d="M7 8 H15 M7 10.500 H15 M7 13 H15" stroke="#98b0e0"/><rect x="0.500" y="2.500" width="9" height="8" fill="#2858c0" stroke="#183890"/><path d="M2 4.500 L3.500 9 L5 5.500 L6.500 9 L8 4.500" stroke="#fff" fill="none" stroke-width="1.100"/></svg>
<div style="position:absolute;left:456.70px;top:1001.94px;line-height:14px;white-space:pre;font-family:'Liberation Sans',sans-serif;font-size:11px;font-weight:normal;font-style:normal;letter-spacing:0.020px;">шпоры по дераву - Micr…</div>
<div class="btn" style="left:596px;top:998px;width:160px;height:22px"></div>
<svg style="position:absolute;left:600px;top:1000px;" width="17" height="18" viewBox="0 0 17 18"><path d="M4.500 1.500 H13 L16.500 5 V16.500 H4.500 Z" fill="#f0f4ff" stroke="#7090d0"/><path d="M13 1.500 V5 H16.500" fill="#fff" stroke="#7090d0"/><path d="M7 8 H15 M7 10.500 H15 M7 13 H15" stroke="#98b0e0"/><rect x="0.500" y="2.500" width="9" height="8" fill="#2858c0" stroke="#183890"/><path d="M2 4.500 L3.500 9 L5 5.500 L6.500 9 L8 4.500" stroke="#fff" fill="none" stroke-width="1.100"/></svg>
<div style="position:absolute;left:620.00px;top:1001.94px;line-height:14px;white-space:pre;font-family:'Liberation Sans',sans-serif;font-size:11px;font-weight:normal;font-style:normal;letter-spacing:-0.032px;">лабораторные работы …</div>
<div class="btn" style="left:759px;top:998px;width:160px;height:22px"></div>
<svg style="position:absolute;left:763px;top:1000px;" width="18" height="18" viewBox="0 0 18 18"><path d="M9 1 L17 9 L9 17 L1 9 Z" fill="#f0f0e8" stroke="#303030" stroke-width="1.400"/><path d="M12.500 3 L5.500 9.500 H9.500 L5.500 15.500 L13.500 8 H9.500 Z" fill="#f89818" stroke="#c06000" stroke-width=".600"/></svg>
<div style="position:absolute;left:783.00px;top:1001.94px;line-height:14px;white-space:pre;font-family:'Liberation Sans',sans-serif;font-size:11px;font-weight:normal;font-style:normal;letter-spacing:0.014px;">33. 007 - Клава-сирень …</div>
<div class="btn" style="left:922px;top:998px;width:160px;height:22px"></div>
<svg style="position:absolute;left:926px;top:1001px;" width="17" height="16" viewBox="0 0 17 16"><path d="M1 3.500 C1 2.500 1.500 2 2.500 2 H6 L8 4 H14 C15 4 15.500 4.500 15.500 5.500 V13 C15.500 14 15 14.500 14 14.500 H2.500 C1.500 14.500 1 14 1 13 Z" fill="#f0c838" stroke="#a87c10"/><path d="M1.500 14 L3.500 7 H16.500 L14.500 14 Z" fill="#fce488" stroke="#b88c18"/></svg>
<div style="position:absolute;left:946.00px;top:1001.94px;line-height:14px;white-space:pre;font-family:'Liberation Sans',sans-serif;font-size:11px;font-weight:normal;font-style:normal;letter-spacing:0.021px;">лабораторные работы</div>
<div style="position:absolute;left:1163px;top:1000px;width:1px;height:20px;background:#fff"></div>
<div style="position:absolute;left:1164px;top:1000px;width:1px;height:20px;background:#808080"></div>
<div style="position:absolute;left:1174px;top:1002px;width:16px;height:16px;background:#0a246a"></div>
<div style="position:absolute;left:1175.00px;top:1002.99px;line-height:14px;white-space:pre;font-family:'Liberation Sans',sans-serif;font-size:11px;font-weight:normal;font-style:normal;letter-spacing:-1.195px;color:#fff;">RU</div>
<div style="position:absolute;left:1194px;top:1000px;width:1px;height:20px;background:#fff"></div>
<div style="position:absolute;left:1195px;top:1000px;width:1px;height:20px;background:#808080"></div>
<div style="position:absolute;left:1201px;top:998px;width:77px;height:23px;box-sizing:border-box;border:1px solid;border-color:#808080 #fff #fff #808080"></div>
<div style="position:absolute;left:1206.00px;top:1000.84px;line-height:16px;white-space:pre;font-family:'Liberation Sans',sans-serif;font-size:12px;font-weight:bold;font-style:normal;letter-spacing:1.312px;">«</div>
<svg style="position:absolute;left:1218px;top:1001px;" width="17" height="16" viewBox="0 0 17 16"><path d="M1.500 1.500 H7 V6.500 L11 1.500 H14.500 L1.500 14.500 Z" fill="#f80000" stroke="#fff" stroke-width="1" stroke-linejoin="round"/><path d="M8 8.500 L13.500 14 M13.500 14 V9.500 M13.500 14 H9" stroke="#fff" stroke-width="3.400" fill="none"/><path d="M8 8.500 L13 13.500" stroke="#000" stroke-width="2" fill="none"/><path d="M14 9 V14.500 H8.500 Z" fill="#000"/></svg>
<div style="position:absolute;left:1244.75px;top:1002.19px;line-height:14px;white-space:pre;font-family:'Liberation Sans',sans-serif;font-size:11px;font-weight:normal;font-style:normal;letter-spacing:-0.105px;">4:45</div>
</div></body></html>
